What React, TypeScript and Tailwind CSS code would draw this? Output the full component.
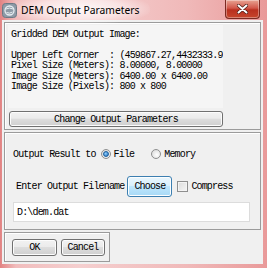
const mono = "font-['Liberation_Mono','DejaVu_Sans_Mono',monospace] text-[10px] tracking-[-0.84px] text-black";

function WinButton({
  label,
  className = "",
  hot = false,
}: {
  label: string;
  className?: string;
  hot?: boolean;
}) {
  return (
    <div
      className={
        "flex items-center justify-center rounded-[3px] border " +
        (hot
          ? "border-[#3c7fb1] bg-[linear-gradient(#eaf6fd_0%,#d9f0fc_45%,#bee6fd_50%,#a7d9f5_100%)] shadow-[inset_0_0_0_1px_#fcfdfe] "
          : "border-[#707070] bg-[linear-gradient(#f2f2f2_0%,#ebebeb_45%,#dddddd_50%,#cfcfcf_100%)] shadow-[inset_0_0_0_1px_#fcfcfc] ") +
        mono +
        " " +
        className
      }
    >
      {label}
    </div>
  );
}

function Radio({ checked }: { checked?: boolean }) {
  return (
    <div className="flex h-[10px] w-[10px] items-center justify-center rounded-full border border-[#8e8f8f] bg-[radial-gradient(circle_at_60%_60%,#ffffff,#d4d4d4)]">
      {checked && (
        <div className="h-[6px] w-[6px] rounded-full border border-[#1b5f9c] bg-[radial-gradient(circle_at_40%_40%,#8fd1ff,#1c66b8)]" />
      )}
    </div>
  );
}

export default function App() {
  return (
    <div className="relative flex h-[268px] w-[267px] flex-col overflow-hidden bg-[linear-gradient(90deg,#e28383_0%,#f1bdbd_6%,#f5cfcf_30%,#f0b9b9_70%,#e99a9a_100%)]">
      {/* title bar */}
      <div className="relative flex h-[20px] items-center">
        <div className="absolute left-[10px] top-[-6px] h-[30px] w-[140px] rounded-full bg-[radial-gradient(ellipse_at_center,rgba(255,255,255,0.85)_0%,rgba(255,255,255,0.5)_45%,rgba(255,255,255,0)_75%)]" />
        <svg className="relative ml-[2px] mt-[1px]" width="15" height="15" viewBox="0 0 15 15">
          <rect x="0.5" y="0.5" width="14" height="14" rx="3" fill="#8d9aa6" stroke="#6c7a86" />
          <circle cx="7.5" cy="7.5" r="4.5" fill="none" stroke="#e8eef2" strokeWidth="1.3" />
          <path d="M4 6 Q7.5 4 11 6 M4.5 9.5 Q7.5 11 10.5 9" fill="none" stroke="#e8eef2" strokeWidth="1" />
        </svg>
        <span className="relative ml-[4px] font-['Noto_Sans','Open_Sans',sans-serif] text-[10.3px] leading-none text-black">
          DEM Output Parameters
        </span>
        <div className="absolute left-[225px] top-0 flex h-[19px] w-[35px] items-center justify-center rounded-b-[4px] border border-t-0 border-[#7a2a22] bg-[linear-gradient(#e8a493_0%,#d2574a_45%,#b9301f_55%,#c6452c_100%)] shadow-[inset_0_0_0_1px_rgba(255,255,255,0.35)]">
          <svg width="11" height="10" viewBox="0 0 11 10">
            <path d="M1.5 1.5 L9.5 8.5 M9.5 1.5 L1.5 8.5" stroke="#4a1a14" strokeWidth="3.4" strokeLinecap="round" />
            <path d="M1.5 1.5 L9.5 8.5 M9.5 1.5 L1.5 8.5" stroke="#ffffff" strokeWidth="2" strokeLinecap="round" />
          </svg>
        </div>
      </div>

      {/* client area */}
      <div className="ml-[2px] flex h-[244px] w-[261px] flex-col gap-[2px] bg-[#f0f0f0] p-[2px]">
        {/* panel 1 */}
        <div className="flex h-[108px] flex-col border border-[#9b9b9b] pl-[3px] pt-[2px] shadow-[inset_1px_1px_0_#ffffff]">
          <div className={"h-[83px] w-[215px] overflow-hidden whitespace-pre bg-[#f5f5f5] pl-[3px] pt-[5px] leading-[10.4px] " + mono}>
            {"Gridded DEM Output Image:\n\nUpper Left Corner  : (459867.27,4432333.9\nPixel Size (Meters): 8.00000, 8.00000\nImage Size (Meters): 6400.00 x 6400.00\nImage Size (Pixels): 800 x 800"}
          </div>
          <WinButton label="Change Output Parameters" className="ml-[1px] mt-[3px] h-[16px] w-[214px]" />
        </div>

        {/* panel 2 */}
        <div className="flex h-[98px] flex-col border border-[#9b9b9b] shadow-[inset_1px_1px_0_#ffffff]">
          <div className={"mt-[15px] flex h-[12px] items-center pl-[8px] " + mono}>
            <span>Output Result to</span>
            <div className="ml-[5px]">
              <Radio checked />
            </div>
            <span className="ml-[3px]">File</span>
            <div className="ml-[17px]">
              <Radio />
            </div>
            <span className="ml-[3px]">Memory</span>
          </div>
          <div className={"mt-[16px] flex h-[21px] items-center pl-[11px] " + mono}>
            <span>Enter Output Filename</span>
            <WinButton label="Choose" hot className="ml-[3px] h-[21px] w-[45px]" />
            <div className="ml-[5px] h-[11px] w-[11px] border border-[#8f8f8f] bg-[linear-gradient(135deg,#dcdcdc,#f6f6f6)] shadow-[inset_0_0_0_1px_#f4f4f4]" />
            <span className="ml-[3px]">Compress</span>
          </div>
          <div className={"ml-[8px] mt-[5px] flex h-[20px] w-[237px] items-center border border-[#dcdcdc] bg-white pl-[3px] " + mono}>
            D:\dem.dat
          </div>
        </div>

        {/* panel 3 */}
        <div className="flex h-[30px] w-[106px] items-center gap-[4px] border border-[#9b9b9b] pl-[7px] pt-[1px] shadow-[inset_1px_1px_0_#ffffff]">
          <WinButton label="OK" className="h-[17px] w-[45px]" />
          <WinButton label="Cancel" className="h-[17px] w-[44px]" />
        </div>
      </div>
    </div>
  );
}
